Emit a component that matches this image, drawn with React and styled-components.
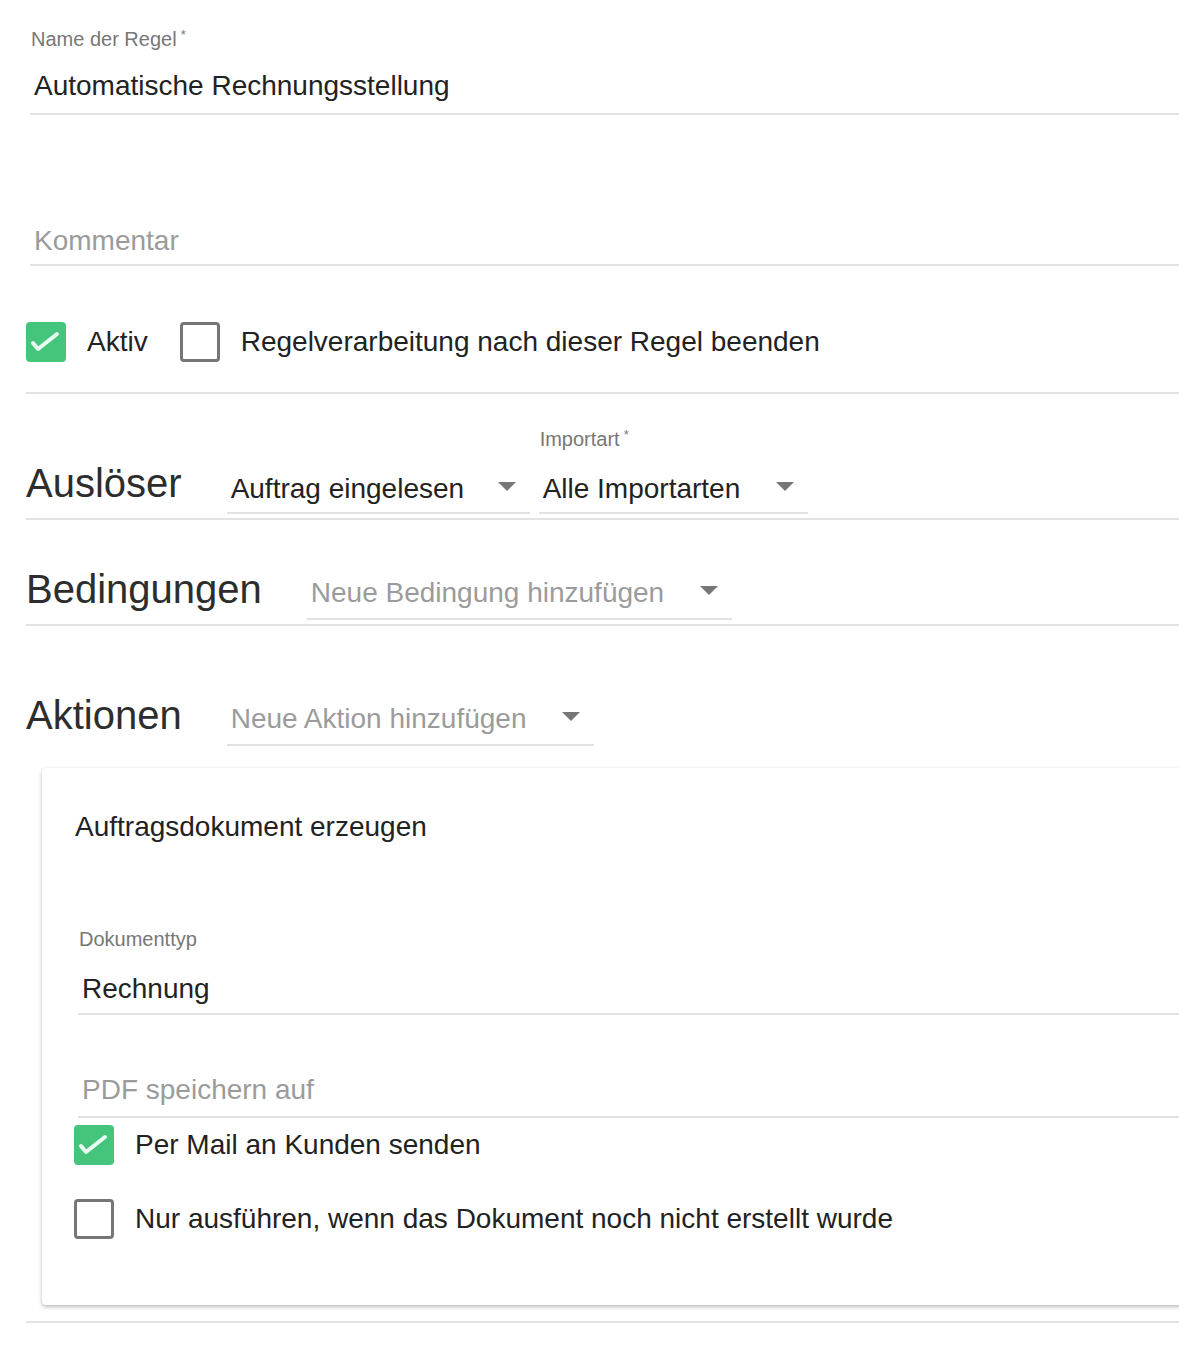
import styled, { createGlobalStyle } from "styled-components";

const GlobalStyle = createGlobalStyle`
  html, body {
    margin: 0;
    padding: 0;
    background: #fff;
    overflow: hidden;
  }
  body {
    font-family: "Liberation Sans", Arial, sans-serif;
    color: #212121;
  }
`;

const Field = ({ label, required, value, placeholder, gap = 21, ...rest }) => (
  <FieldWrap {...rest}>
    {label && (
      <FieldLabel $gap={gap}>
        {label}
        {required && <sup>*</sup>}
      </FieldLabel>
    )}
    <FieldValue $muted={!value}>{value || placeholder}</FieldValue>
  </FieldWrap>
);

const Select = ({ label, value, placeholder, width, pb = 7 }) => (
  <SelectWrap style={{ width }}>
    {label && (
      <FieldLabel $gap={21}>
        {label}
        <sup>*</sup>
      </FieldLabel>
    )}
    <SelectBox $pb={pb}>
      <FieldValue $muted={!value}>{value || placeholder}</FieldValue>
      <Arrow />
    </SelectBox>
  </SelectWrap>
);

const Check = ({ checked, children }) => (
  <CheckItem>
    <Box $checked={checked}>
      {checked && (
        <svg width="40" height="40" viewBox="0 0 40 40">
          <path
            d="M7 21 L12 27 L31 12"
            fill="none"
            stroke="#e8fff1"
            strokeWidth="4"
            strokeLinecap="round"
            strokeLinejoin="round"
          />
        </svg>
      )}
    </Box>
    <span>{children}</span>
  </CheckItem>
);

const App = () => {
  return (
    <Page>
      <GlobalStyle />
      <Field
        label="Name der Regel"
        required
        value="Automatische Rechnungsstellung"
        gap={18}
        $top={28}
        $bottom={9}
        $indent={4}
      />
      <Field placeholder="Kommentar" $top={108} $bottom={5} $indent={4} />

      <CheckRow>
        <Check checked>Aktiv</Check>
        <Check>Regelverarbeitung nach dieser Regel beenden</Check>
      </CheckRow>

      <Section $top={34}>
        <Heading>Auslöser</Heading>
        <Select value="Auftrag eingelesen" width={303} pb={5} />
        <Select label="Importart" value="Alle Importarten" width={269} pb={5} />
      </Section>

      <Section $top={46}>
        <Heading>Bedingungen</Heading>
        <Select placeholder="Neue Bedingung hinzufügen" width={425} />
      </Section>

      <Block>
        <Section $top={66} $plain>
          <Heading>Aktionen</Heading>
          <Select placeholder="Neue Aktion hinzufügen" width={367} />
        </Section>

        <Card>
          <CardTitle>Auftragsdokument erzeugen</CardTitle>
          <CardBody>
            <Field label="Dokumenttyp" value="Rechnung" $top={83} $bottom={6} />
            <Field placeholder="PDF speichern auf" $top={57} $bottom={8} />
            <CardChecks>
              <Check checked>Per Mail an Kunden senden</Check>
              <Check>Nur ausführen, wenn das Dokument noch nicht erstellt wurde</Check>
            </CardChecks>
          </CardBody>
        </Card>
      </Block>
    </Page>
  );
};

const Page = styled.div`
  width: 1240px;
  padding-left: 26px;
`;

const FieldWrap = styled.div`
  margin-left: ${(p) => p.$indent || 0}px;
  padding-top: ${(p) => p.$top || 0}px;
  padding-bottom: ${(p) => p.$bottom ?? 7}px;
  border-bottom: 2px solid #e2e2e2;
`;

const FieldLabel = styled.div`
  font-size: 20px;
  line-height: 22px;
  color: #777;
  margin: 0 0 ${(p) => p.$gap}px 1px;

  sup {
    font-size: 13px;
    margin-left: 4px;
    vertical-align: 7px;
    line-height: 0;
  }
`;

const FieldValue = styled.div`
  font-size: 28px;
  line-height: 36px;
  padding-left: 4px;
  color: ${(p) => (p.$muted ? "#9b9b9b" : "#222")};
  white-space: nowrap;
`;

const CheckRow = styled.div`
  display: flex;
  align-items: center;
  gap: 32px;
  padding: 56px 0 30px;
  border-bottom: 2px solid #e2e2e2;
`;

const CheckItem = styled.label`
  display: flex;
  align-items: center;
  gap: 21px;
  font-size: 28px;
  line-height: 40px;
  color: #222;
  white-space: nowrap;
`;

const Box = styled.span`
  box-sizing: border-box;
  width: 40px;
  height: 40px;
  flex: none;
  border-radius: 4px;
  background: ${(p) => (p.$checked ? "#45c47b" : "#fff")};
  border: ${(p) => (p.$checked ? "none" : "3px solid #767676")};
  display: flex;

  svg {
    display: block;
  }
`;

const Section = styled.div`
  display: flex;
  align-items: flex-end;
  padding-top: ${(p) => p.$top}px;
  padding-bottom: ${(p) => (p.$plain ? 0 : 4)}px;
  border-bottom: ${(p) => (p.$plain ? "none" : "2px solid #e2e2e2")};
`;

const Heading = styled.h2`
  margin: 0 45px 8px 0;
  font-size: 40px;
  line-height: 46px;
  font-weight: normal;
  color: #2d2d2d;
  white-space: nowrap;
`;

const SelectWrap = styled.div`
  flex: none;
  margin-right: 9px;
`;

const SelectBox = styled.div`
  display: flex;
  align-items: center;
  justify-content: space-between;
  padding: 0 14px ${(p) => p.$pb}px 0;
  border-bottom: 2px solid #e2e2e2;
`;

const Arrow = styled.span`
  width: 0;
  height: 0;
  margin-top: -6px;
  border-left: 9px solid transparent;
  border-right: 9px solid transparent;
  border-top: 9px solid #767676;
`;

const Block = styled.div`
  padding-bottom: 16px;
  border-bottom: 2px solid #e2e2e2;
`;

const Card = styled.div`
  margin: 22px 0 0 16px;
  padding: 41px 0 66px;
  background: #fff;
  border-radius: 4px;
  box-shadow: 0 2px 4px rgba(0, 0, 0, 0.26), 0 0 1px rgba(0, 0, 0, 0.1);
`;

const CardTitle = styled.div`
  padding-left: 33px;
  font-size: 28px;
  line-height: 36px;
  color: #222;
`;

const CardBody = styled.div`
  padding-left: 36px;
`;

const CardChecks = styled.div`
  display: flex;
  flex-direction: column;
  gap: 34px;
  margin: 7px 0 0 -4px;
`;

export default App;
